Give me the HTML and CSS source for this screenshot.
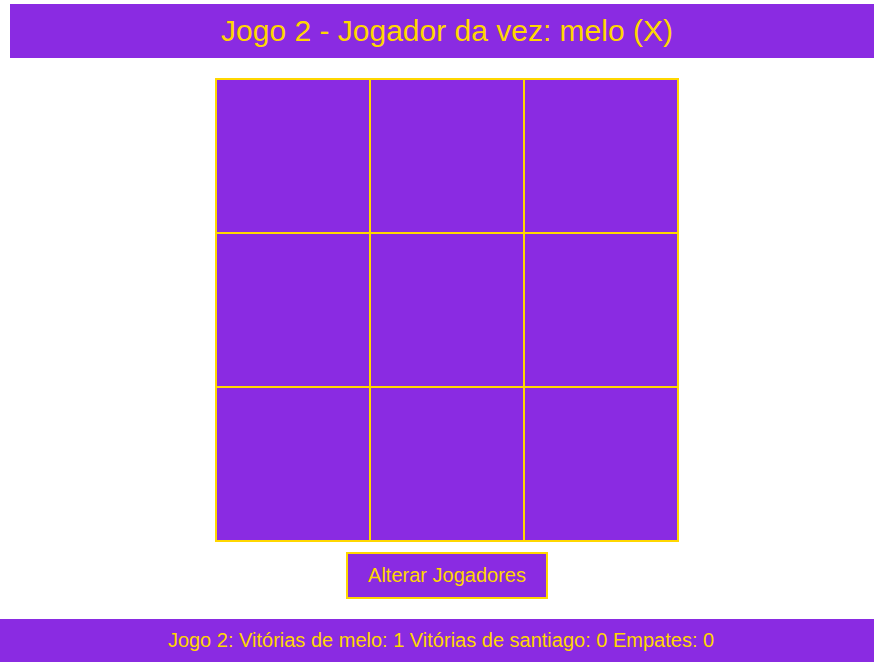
FILE: index.html
```html
<!DOCTYPE html>
<html lang="pt">
<head>
<meta charset="utf-8">
<title>Jogo da Velha</title>
<link rel="stylesheet" href="styles.css">
</head>
<body>
<div class="page">
  <h1 class="header">Jogo 2 - Jogador da vez: melo (X)</h1>
  <main class="main">
    <div class="board">
      <div class="cell"></div><div class="cell"></div><div class="cell"></div>
      <div class="cell"></div><div class="cell"></div><div class="cell"></div>
      <div class="cell"></div><div class="cell"></div><div class="cell"></div>
    </div>
    <button class="btn">Alterar Jogadores</button>
  </main>
</div>
<footer class="footer">Jogo 2: Vitórias de melo: 1 Vitórias de santiago: 0 Empates: 0</footer>
</body>
</html>
```
FILE: styles.css
```css
html, body {
  margin: 0;
  padding: 0;
  overflow: hidden;
  background: #ffffff;
  font-family: "Liberation Sans", Arial, sans-serif;
}
.page {
  margin: 4px 0 0 10px;
  width: 874px;
}
.header {
  margin: 0;
  height: 54px;
  display: flex;
  align-items: center;
  justify-content: center;
  background: #8a2be2;
  color: #ffd700;
  font-size: 30px;
  font-weight: normal;
}
.main {
  display: flex;
  flex-direction: column;
  align-items: center;
  padding-top: 20px;
}
.board {
  display: grid;
  grid-template-columns: repeat(3, 154px);
  grid-template-rows: repeat(3, 154px);
  border: 1px solid #ffd700;
}
.cell {
  box-sizing: border-box;
  border: 1px solid #ffd700;
  background: #8a2be2;
}
.btn {
  margin-top: 10px;
  width: 202px;
  height: 47px;
  box-sizing: border-box;
  border: 2px solid #ffd700;
  background: #8a2be2;
  color: #ffd700;
  font-family: "Liberation Sans", Arial, sans-serif;
  font-size: 20px;
  padding: 0;
}
.footer {
  margin-top: 20px;
  width: 874px;
  box-sizing: border-box;
  padding-left: 8px;
  height: 43px;
  display: flex;
  align-items: center;
  justify-content: center;
  background: #8a2be2;
  color: #ffd700;
  font-size: 20px;
}
```
